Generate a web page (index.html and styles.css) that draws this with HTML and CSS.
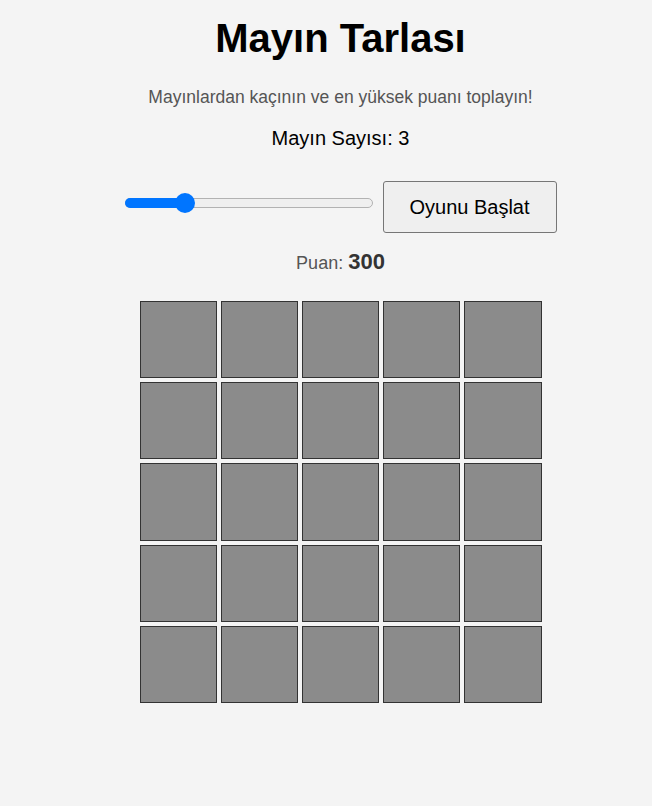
FILE: index.html
```html
<!DOCTYPE html>
<html lang="tr">
<head>
<meta charset="utf-8">
<title>Mayın Tarlası</title>
<link rel="stylesheet" href="styles.css">
</head>
<body>
<main class="app">
  <h1 class="title">Mayın Tarlası</h1>
  <p class="subtitle">Mayınlardan kaçının ve en yüksek puanı toplayın!</p>
  <p class="mine-count">Mayın Sayısı: 3</p>
  <div class="controls">
    <div class="range" role="slider" aria-valuemin="1" aria-valuemax="10" aria-valuenow="3" aria-label="Mayın Sayısı">
      <div class="range-fill" style="width: 61px"></div>
      <div class="range-thumb" style="left: 49px"></div>
    </div>
    <button class="start-btn" type="button">Oyunu Başlat</button>
  </div>
  <p class="score">Puan: <span class="score-value">300</span></p>
  <div class="board">
    <div class="cell"></div><div class="cell"></div><div class="cell"></div><div class="cell"></div><div class="cell"></div>
    <div class="cell"></div><div class="cell"></div><div class="cell"></div><div class="cell"></div><div class="cell"></div>
    <div class="cell"></div><div class="cell"></div><div class="cell"></div><div class="cell"></div><div class="cell"></div>
    <div class="cell"></div><div class="cell"></div><div class="cell"></div><div class="cell"></div><div class="cell"></div>
    <div class="cell"></div><div class="cell"></div><div class="cell"></div><div class="cell"></div><div class="cell"></div>
  </div>
</main>
</body>
</html>
```
FILE: styles.css
```css
html, body {
  margin: 0;
  padding: 0;
  background: #f4f4f4;
}

body {
  font-family: "Liberation Sans", Arial, sans-serif;
  color: #000;
}

.app {
  box-sizing: border-box;
  padding-left: 29px;
  display: flex;
  flex-direction: column;
  align-items: center;
  text-align: center;
}

.title {
  margin: 15px 0 0;
  font-size: 40px;
  line-height: 46px;
  font-weight: bold;
}

.subtitle {
  margin: 26px 0 0;
  font-size: 17.5px;
  line-height: 21px;
  color: #555;
}

.mine-count {
  margin: 19px 0 0;
  font-size: 20px;
  line-height: 23px;
}

.controls {
  margin-top: 31px;
  display: flex;
  align-items: center;
  gap: 10px;
}

.range {
  position: relative;
  box-sizing: border-box;
  width: 248px;
  height: 10px;
  margin-bottom: 8px;
  border: 1px solid #b2b2b2;
  border-radius: 5px;
  background: #efefef;
}

.range-fill {
  position: absolute;
  left: -1px;
  top: -1px;
  bottom: -1px;
  border-radius: 5px;
  background: #0075ff;
}

.range-thumb {
  position: absolute;
  top: -6px;
  width: 20px;
  height: 20px;
  border-radius: 50%;
  background: #0075ff;
}

.start-btn {
  box-sizing: border-box;
  width: 174px;
  height: 52px;
  padding: 0;
  white-space: nowrap;
  font-family: inherit;
  font-size: 20px;
  color: #000;
  background: #efefef;
  border: 1px solid #767676;
  border-radius: 3px;
}

.score {
  margin: 16px 0 0;
  font-size: 18px;
  line-height: 26px;
  color: #555;
}

.score-value {
  font-size: 22px;
  font-weight: bold;
  color: #333;
}

.board {
  margin-top: 25px;
  width: 402px;
  display: grid;
  grid-template-columns: repeat(5, 1fr);
  gap: 4px;
}

.cell {
  box-sizing: border-box;
  aspect-ratio: 1;
  background: #8b8b8b;
  border: 1px solid #333;
}
```
